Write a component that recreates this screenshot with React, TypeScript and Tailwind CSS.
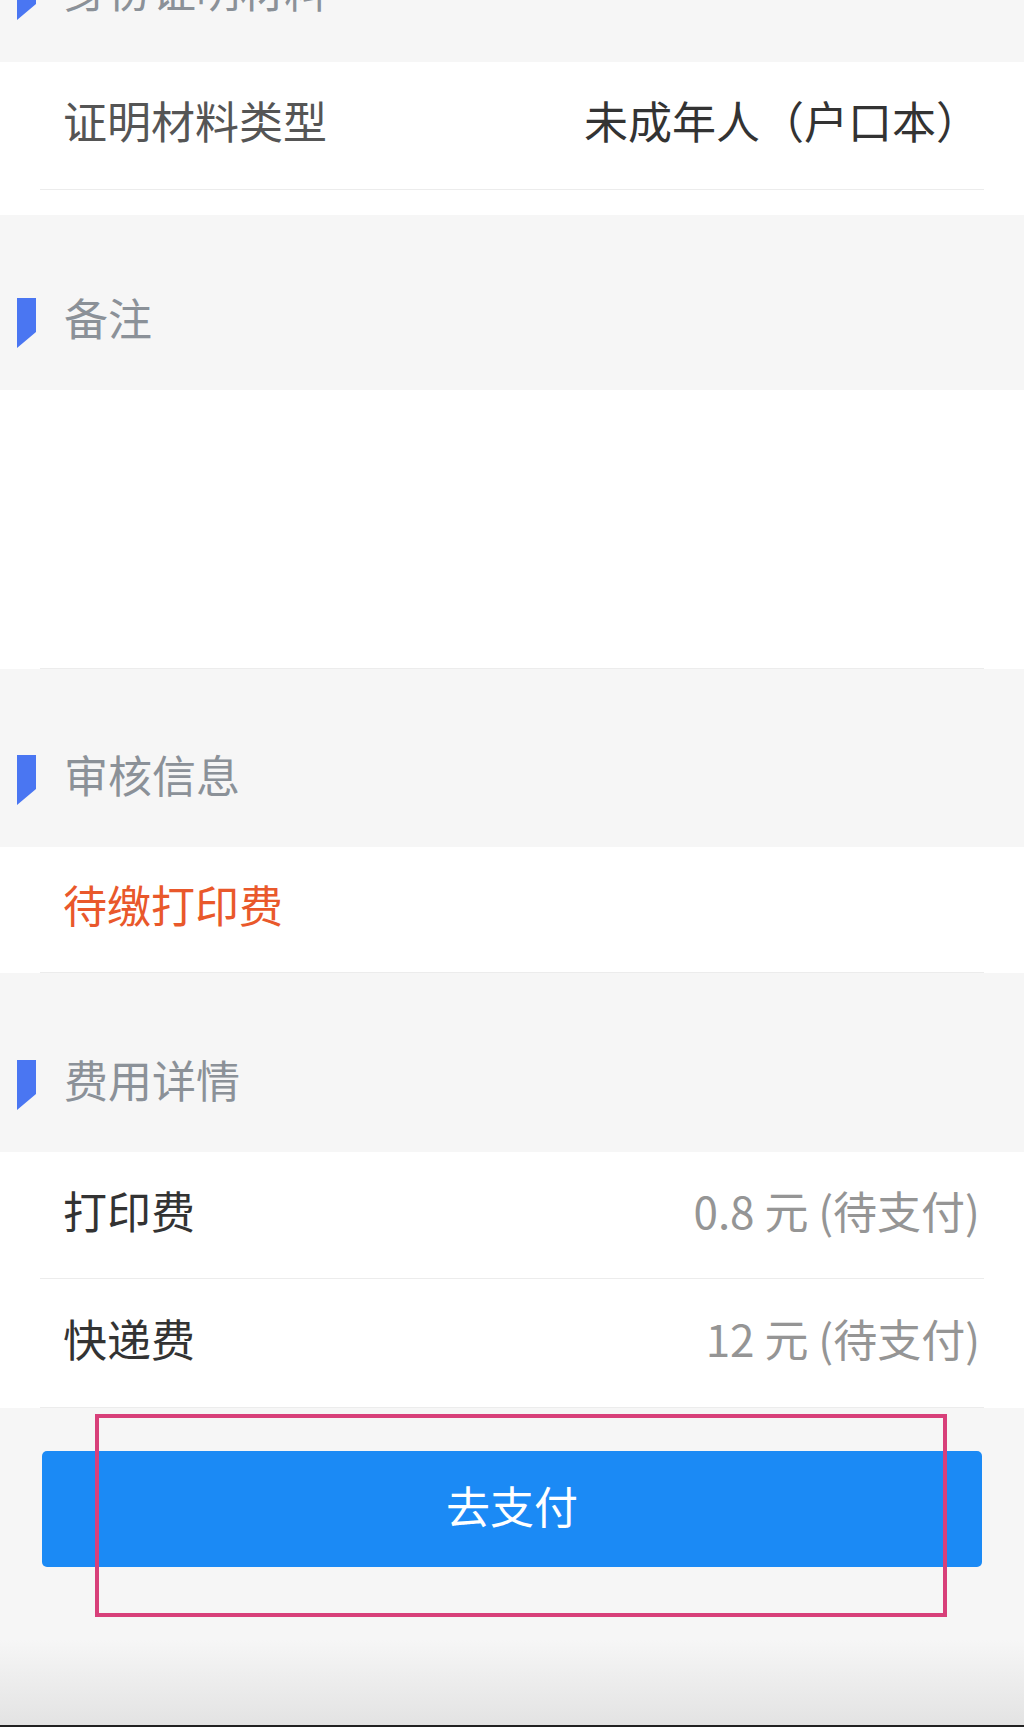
import React from "react";

const FONT = { fontFamily: '"Noto Sans CJK SC", "Noto Sans", sans-serif' };

function Marker() {
  return (
    <svg width="19" height="50" viewBox="0 0 19 50" className="shrink-0">
      <polygon points="0,0 19,0 19,34 0,50" fill="#4a76f2" />
    </svg>
  );
}

function Header({ title }: { title: string }) {
  return (
    <div className="h-[134px] shrink-0 flex items-center pl-[17px]">
      <Marker />
      <span className="ml-[28px] pb-[13px] text-[44px] leading-none text-[#8b9198]">{title}</span>
    </div>
  );
}

function Divider() {
  return <div className="mx-[40px] h-px bg-[#ececec]" />;
}

function Row({
  label,
  value,
  labelColor,
  valueColor,
  h,
}: {
  label: string;
  value?: string;
  labelColor: string;
  valueColor?: string;
  h: string;
}) {
  return (
    <div className={`${h} flex items-center justify-between pl-[63px] pr-[44px]`}>
      <span className={`pb-[11px] text-[44px] leading-none ${labelColor}`}>{label}</span>
      {value && <span className={`pb-[11px] text-[44px] leading-none ${valueColor}`}>{value}</span>}
    </div>
  );
}

export default function App() {
  return (
    <div style={FONT} className="relative w-[1024px] h-[1727px] bg-[#f6f6f6] flex flex-col overflow-hidden">
      {/* first header (scrolled, partially cut) */}
      <div className="h-[62px] overflow-hidden flex flex-col justify-end">
        <Header title="身份证明材料" />
      </div>

      <div className="bg-white pb-[25px]">
        <Row
          h="h-[127px]"
          label="证明材料类型"
          value="未成年人（户口本）"
          labelColor="text-[#555555]"
          valueColor="text-[#333333]"
        />
        <Divider />
      </div>

      <div className="h-[175px] flex flex-col justify-end">
        <Header title="备注" />
      </div>

      <div className="bg-white h-[279px] flex flex-col justify-end">
        <Divider />
      </div>

      <div className="h-[178px] flex flex-col justify-end">
        <Header title="审核信息" />
      </div>

      <div className="bg-white">
        <Row h="h-[125px]" label="待缴打印费" labelColor="text-[#e9582b]" />
        <Divider />
      </div>

      <div className="h-[179px] flex flex-col justify-end">
        <Header title="费用详情" />
      </div>

      <div className="bg-white">
        <Row
          h="h-[126px]"
          label="打印费"
          value="0.8 元 (待支付)"
          labelColor="text-[#333333]"
          valueColor="text-[#959595]"
        />
        <Divider />
        <Row
          h="h-[128px]"
          label="快递费"
          value="12 元 (待支付)"
          labelColor="text-[#333333]"
          valueColor="text-[#959595]"
        />
        <Divider />
      </div>

      <div className="px-[42px] pt-[43px]">
        <button className="w-full h-[116px] rounded-[5px] bg-[#1b8af5] text-white text-[44px] leading-none flex items-center justify-center">
          <span className="pb-[9px]">去支付</span>
        </button>
      </div>

      <div className="flex-1" />
      <div className="h-[85px] bg-gradient-to-b from-[#f6f6f6] to-[#e3e3e3]" />
      <div className="h-[2px] bg-[#222222]" />

      {/* annotation overlay */}
      <div className="absolute left-[95px] top-[1414px] w-[852px] h-[203px] border-[4px] border-[#d8407a] pointer-events-none" />
    </div>
  );
}
